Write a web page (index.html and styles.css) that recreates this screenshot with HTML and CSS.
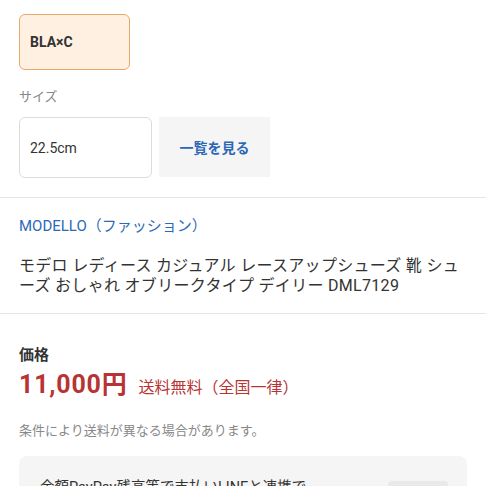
FILE: index.html
```html
<!DOCTYPE html>
<html lang="ja">
<head>
<meta charset="utf-8">
<link rel="stylesheet" href="styles.css">
</head>
<body>
<main class="page">
  <section class="section options">
    <div class="label label-top">カラー</div>
    <div class="color-option">BLA×C</div>
    <div class="label label-size">サイズ</div>
    <div class="size-row">
      <div class="size-box">22.5cm</div>
      <div class="list-btn">一覧を見る</div>
    </div>
  </section>
  <section class="section info">
    <div class="brand">MODELLO（ファッション）</div>
    <h1 class="title">モデロ レディース カジュアル レースアップシューズ 靴 シューズ おしゃれ オブリークタイプ デイリー DML7129</h1>
  </section>
  <section class="section price">
    <div class="price-label">価格</div>
    <div class="price-row">
      <span class="price-value">11,000円</span>
      <span class="shipping">送料無料（全国一律）</span>
    </div>
    <p class="note">条件により送料が異なる場合があります。</p>
    <div class="promo">
      <span class="promo-text">金額PayPay残高等で支払いLINEと連携で</span>
      <span class="promo-btn"></span>
    </div>
  </section>
</main>
</body>
</html>
```

FILE: styles.css
```css
* { box-sizing: border-box; }
html, body { margin: 0; padding: 0; background: #fff; }
body {
  font-family: Roboto, "Noto Sans CJK JP", sans-serif;
  color: #333;
  height: 486px;
  overflow: hidden;
}
.page { margin-top: -15px; }
.section {
  padding: 0 19px;
  border-bottom: 1px solid #e6e6e6;
}
.label {
  font-size: 13px;
  line-height: 18px;
  color: #888;
}
.color-option {
  margin-top: 11px;
  width: 111px;
  height: 56px;
  border: 1px solid #eaa96a;
  border-radius: 6px;
  background: #fff0e2;
  display: flex;
  align-items: center;
  padding-left: 10px;
  font-size: 14px;
  font-weight: 700;
  color: #333;
}
.label-size { margin-top: 18px; }
.size-row {
  margin-top: 11px;
  display: flex;
  gap: 7px;
  padding-bottom: 19px;
}
.size-box {
  width: 133px;
  height: 61px;
  border: 1px solid #dcdcdc;
  border-radius: 6px;
  display: flex;
  align-items: center;
  padding-left: 10px;
  font-size: 14px;
  color: #333;
}
.list-btn {
  width: 111px;
  height: 60px;
  background: #f5f5f5;
  display: flex;
  align-items: center;
  justify-content: center;
  font-size: 14px;
  font-weight: 700;
  color: #2a68b6;
}
.info { padding-top: 17px; padding-bottom: 17px; }
.brand {
  font-size: 15px;
  line-height: 22px;
  color: #2a6bb8;
}
.title {
  margin: 19px 0 0;
  font-size: 16px;
  font-weight: 400;
  line-height: 20px;
  letter-spacing: 0.3px;
  color: #333;
}
.price { padding-top: 30px; border-bottom: none; }
.price-label {
  font-size: 15px;
  font-weight: 700;
  line-height: 22px;
  color: #333;
}
.price-row {
  margin-top: 3px;
  display: flex;
  align-items: baseline;
  gap: 11px;
  line-height: 32px;
}
.price-value {
  font-size: 25px;
  font-weight: 700;
  letter-spacing: 0.8px;
  color: #b83333;
}
.shipping {
  font-size: 16px;
  color: #b83333;
}
.note {
  margin: 18px 0 0;
  font-size: 13px;
  line-height: 18px;
  color: #888;
}
.promo {
  margin-top: 16px;
  height: 60px;
  border-radius: 8px;
  background: #f5f5f5;
  display: flex;
  justify-content: space-between;
  align-items: flex-start;
  padding: 22px 19px 0 21px;
}
.promo-text {
  font-size: 14.5px;
  line-height: 20px;
  color: #333;
}
.promo-btn {
  margin-top: 3px;
  width: 60px;
  height: 30px;
  border-radius: 4px;
  background: #e9e9e9;
}
```
